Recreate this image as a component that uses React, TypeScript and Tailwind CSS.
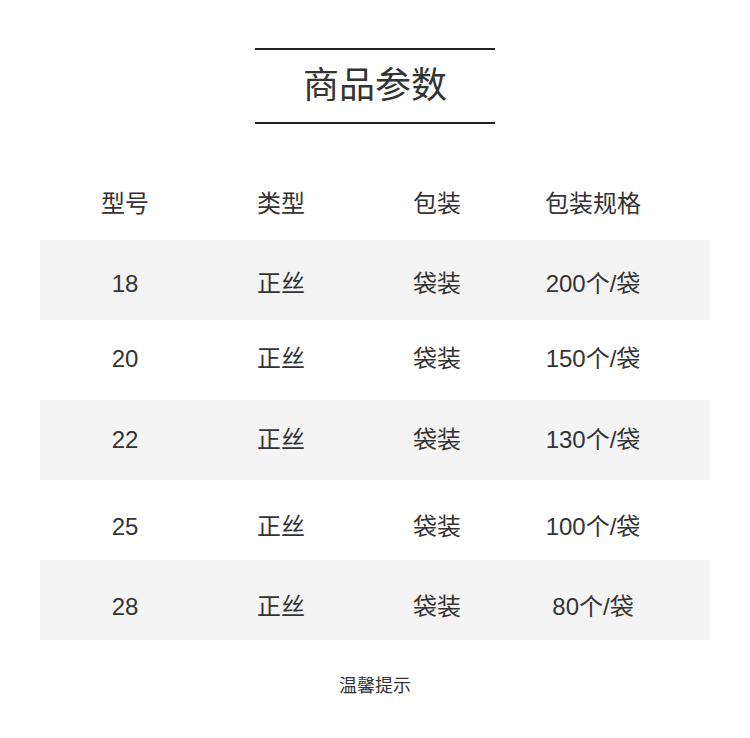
const rows = [
  { model: "18", type: "正丝", pack: "袋装", spec: "200个/袋", gray: true, pad: "pt-[8px]" },
  { model: "20", type: "正丝", pack: "袋装", spec: "150个/袋", gray: false, pad: "pb-[2px]" },
  { model: "22", type: "正丝", pack: "袋装", spec: "130个/袋", gray: true, pad: "" },
  { model: "25", type: "正丝", pack: "袋装", spec: "100个/袋", gray: false, pad: "pt-[14px]" },
  { model: "28", type: "正丝", pack: "袋装", spec: "80个/袋", gray: true, pad: "pt-[14px]" },
];

const headers = ["型号", "类型", "包装", "包装规格"];

export default function App() {
  return (
    <div
      className="w-[750px] h-[738px] bg-white text-[#333] flex flex-col items-center pt-[48px]"
      style={{ fontFamily: '"Liberation Sans", "Noto Sans CJK SC", sans-serif' }}
    >
      {/* Title */}
      <div className="w-[240px] h-[2px] bg-[#222]" />
      <div className="h-[72px] flex items-center justify-center text-[36px] leading-none">
        商品参数
      </div>
      <div className="w-[240px] h-[2px] bg-[#222]" />

      {/* Table */}
      <div className="w-[670px] mt-[44px]">
        <div className="grid grid-cols-[156px_156px_156px_156px] pl-[7px] h-[72px] text-[24px]">
          {headers.map((h) => (
            <div key={h} className="flex items-center justify-center">
              {h}
            </div>
          ))}
        </div>
        {rows.map((r) => (
          <div
            key={r.model}
            className={`grid grid-cols-[156px_156px_156px_156px] pl-[7px] h-[80px] text-[24px] ${
              r.gray ? "bg-[#f4f4f4]" : "bg-white"
            }`}
          >
            {[r.model, r.type, r.pack, r.spec].map((v, i) => (
              <div key={i} className={`flex items-center justify-center ${r.pad}`}>
                {v}
              </div>
            ))}
          </div>
        ))}
      </div>

      {/* Footer */}
      <div className="h-[92px] flex items-center justify-center text-[18px]">温馨提示</div>
    </div>
  );
}
